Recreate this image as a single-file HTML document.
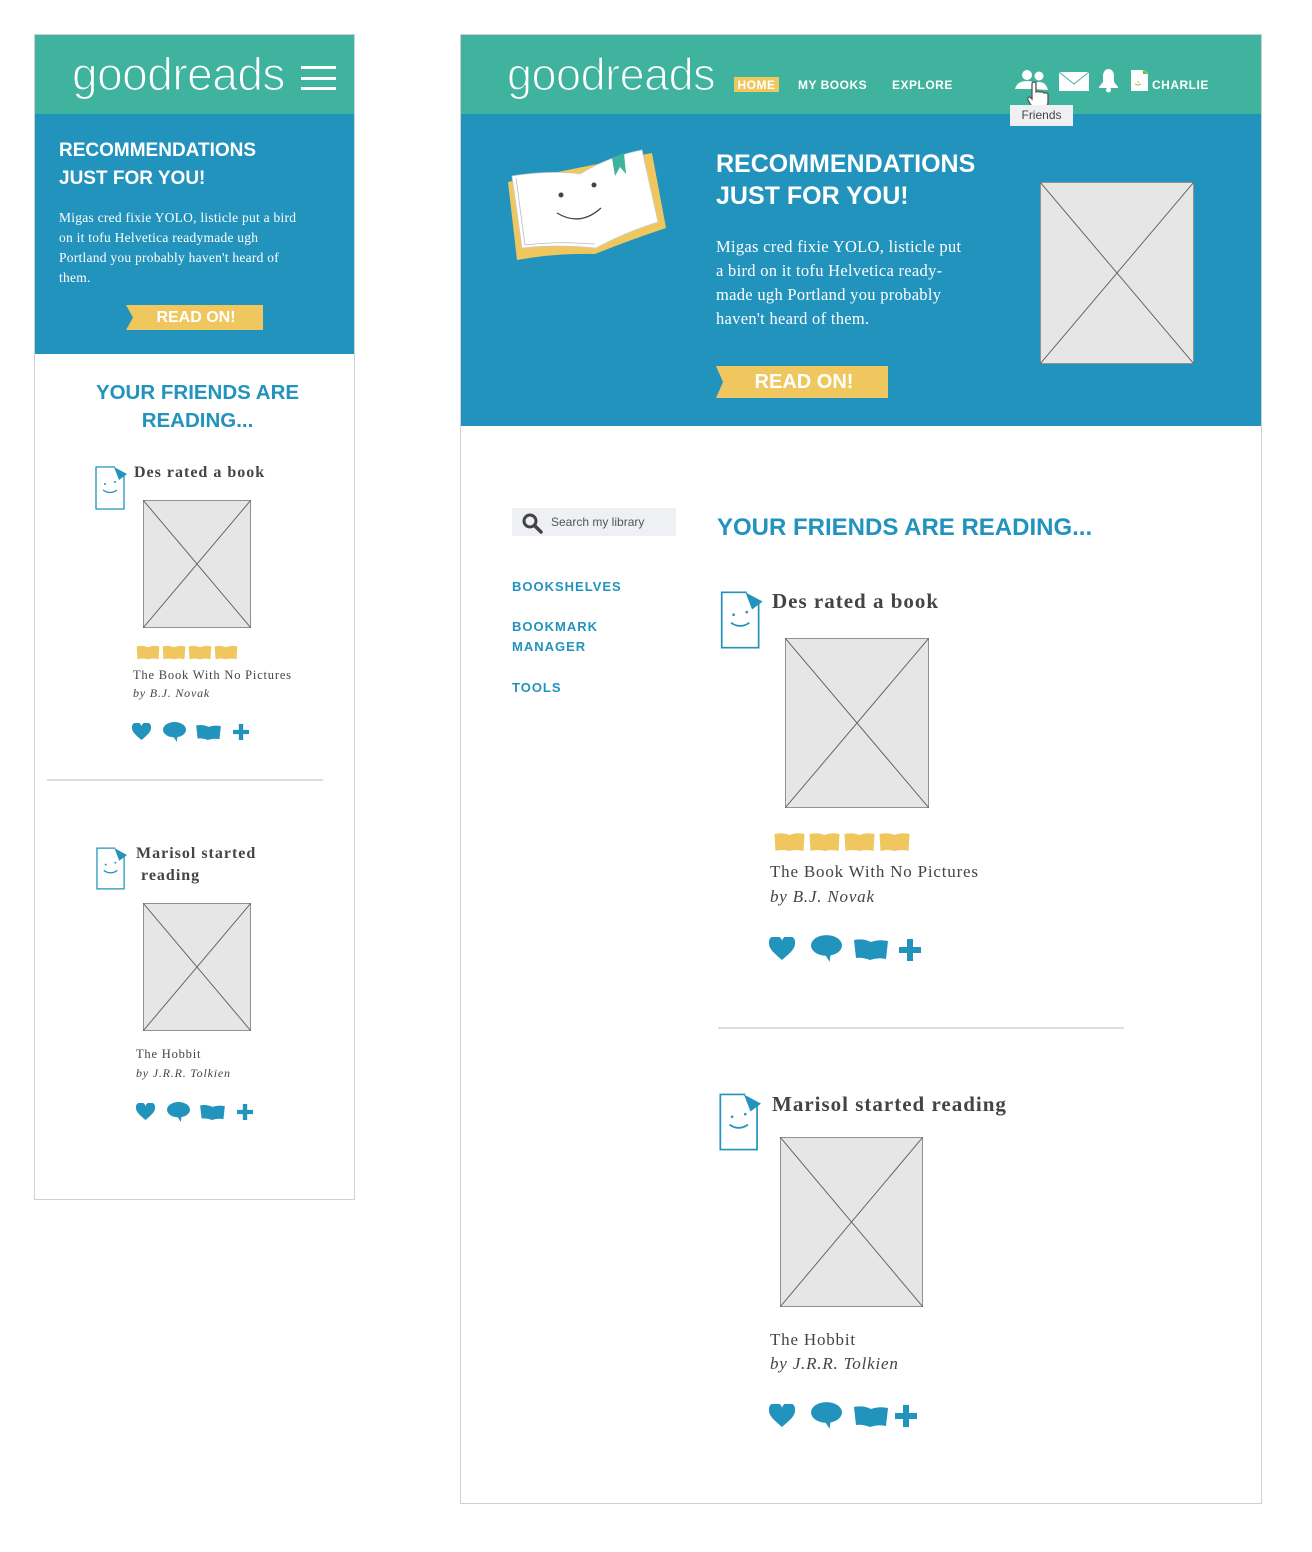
<!DOCTYPE html>
<html><head><meta charset="utf-8">
<style>
*{margin:0;padding:0;box-sizing:border-box}
body{width:1312px;height:1552px;background:#fff;position:relative;overflow:hidden;font-family:"Liberation Sans",sans-serif}
.a{position:absolute;white-space:nowrap}
.panel{position:absolute;border:1px solid #d0d0d0;background:#fff}
.green{background:#3fb39d}
.blue{background:#2293bc}
.logo{color:#fff;font-weight:normal;letter-spacing:-0.5px;-webkit-text-stroke:1.3px #3fb39d}
.hd{color:#fff;font-weight:bold}
.serif{font-family:"Liberation Serif",serif}
.nav{color:#fff;font-weight:bold;font-size:12px;letter-spacing:.5px}
.side{color:#2293bc;font-weight:bold;font-size:13px;letter-spacing:1px;line-height:20px}
.ttl{color:#2293bc;font-weight:bold}
.who{color:#444;font-family:"Liberation Serif",serif;font-weight:bold;letter-spacing:1px}
.bk{color:#444;font-family:"Liberation Serif",serif;letter-spacing:.8px}
svg{position:absolute;overflow:visible}
</style></head><body>
<svg width="0" height="0" style="position:absolute">
<defs>
<symbol id="ph" viewBox="0 0 100 100" preserveAspectRatio="none">
<rect x="0" y="0" width="100" height="100" fill="#e6e6e6" stroke="#777" stroke-width="1.5" vector-effect="non-scaling-stroke"/>
<path d="M0 0L100 100M100 0L0 100" stroke="#666" stroke-width="1" vector-effect="non-scaling-stroke"/>
</symbol>
<symbol id="av" viewBox="0 0 32 44">
<path d="M20 1H1V43H29V9" fill="#fff" stroke="#2293bc" stroke-width="1.3"/>
<path d="M19 1L32 8L24 14Z" fill="#2293bc"/>
<circle cx="10" cy="18" r="1" fill="#2293bc"/><circle cx="20" cy="16" r="1" fill="#2293bc"/>
<path d="M8 24Q15 29 22 24" fill="none" stroke="#2293bc" stroke-width="1.3"/>
</symbol>
<symbol id="heart" viewBox="0 0 26 24"><path d="M13 23C5 16 0 12 0 6.5A6.5 6.5 0 0 1 13 4A6.5 6.5 0 0 1 26 6.5C26 12 21 16 13 23Z" fill="#2293bc"/></symbol>
<symbol id="bub" viewBox="0 0 30 26"><ellipse cx="15" cy="10" rx="15" ry="10" fill="#2293bc"/><path d="M13 18L18 26L19 18Z" fill="#2293bc"/></symbol>
<symbol id="book" viewBox="0 0 34 22"><path d="M0 2Q9 0 17 4Q25 1 34 3L32 21Q24 19 16 22Q8 19 2 20Z" fill="#2293bc"/></symbol>
<symbol id="plus" viewBox="0 0 22 22"><path d="M8 0H14V8H22V14H14V22H8V14H0V8H8Z" fill="#2293bc"/></symbol>
<symbol id="star" viewBox="0 0 30 20"><path d="M0 2Q8 0 15 3Q22 0 30 2L29 19Q22 17 15 19Q8 17 1 19Z" fill="#f0c75e"/></symbol>
</defs></svg>

<!-- MOBILE -->
<div class="panel" style="left:34px;top:34px;width:321px;height:1166px"></div>
<div class="a green" style="left:35px;top:35px;width:319px;height:79px"></div>
<div class="a logo" style="left:72px;top:48px;font-size:46px;line-height:52px">goodreads</div>
<div class="a" style="left:301px;top:66px;width:35px;height:3px;background:#fff"></div>
<div class="a" style="left:301px;top:77px;width:35px;height:3px;background:#fff"></div>
<div class="a" style="left:301px;top:87px;width:35px;height:3px;background:#fff"></div>
<div class="a blue" style="left:35px;top:114px;width:319px;height:240px"></div>
<div class="a hd" style="left:59px;top:137px;font-size:19px;line-height:28px">RECOMMENDATIONS<br>JUST FOR YOU!</div>
<div class="a serif" style="left:59px;top:208px;font-size:13.5px;line-height:20px;color:#fff;letter-spacing:.25px">Migas cred fixie YOLO, listicle put a bird<br>on it tofu Helvetica readymade ugh<br>Portland you probably haven't heard of<br>them.</div>
<svg style="left:126px;top:305px" width="137" height="25"><path d="M0 0H137V25H0L7 12.5Z" fill="#f0c75e"/></svg>
<div class="a hd" style="left:126px;top:305px;width:140px;text-align:center;font-size:16px;line-height:25px">READ ON!</div>
<div class="a ttl" style="left:35px;top:379px;width:325px;text-align:center;font-size:20.5px;line-height:28px;white-space:normal">YOUR FRIENDS ARE<br>READING...</div>

<svg style="left:95px;top:466px" width="32" height="44"><use href="#av"/></svg>
<div class="a who" style="left:134px;top:463px;font-size:16px;line-height:20px">Des rated a book</div>
<svg style="left:143px;top:500px" width="108" height="128"><use href="#ph" width="108" height="128"/></svg>
<svg style="left:136px;top:645px" width="24" height="15"><use href="#star" width="24" height="15"/></svg>
<svg style="left:162px;top:645px" width="24" height="15"><use href="#star" width="24" height="15"/></svg>
<svg style="left:188px;top:645px" width="24" height="15"><use href="#star" width="24" height="15"/></svg>
<svg style="left:214px;top:645px" width="24" height="15"><use href="#star" width="24" height="15"/></svg>
<div class="a bk" style="left:133px;top:667px;font-size:12.5px;line-height:16px">The Book With No Pictures</div>
<div class="a bk" style="left:133px;top:685px;font-size:12px;line-height:16px;font-style:italic">by B.J. Novak</div>
<svg style="left:132px;top:723px" width="19" height="18"><use href="#heart" width="19" height="18"/></svg>
<svg style="left:163px;top:722px" width="23" height="20"><use href="#bub" width="23" height="20"/></svg>
<svg style="left:196px;top:724px" width="25" height="16"><use href="#book" width="25" height="16"/></svg>
<svg style="left:233px;top:724px" width="16" height="16"><use href="#plus" width="16" height="16"/></svg>
<div class="a" style="left:47px;top:779px;width:276px;height:2px;background:#ddd"></div>

<svg style="left:96px;top:847px" width="31" height="43"><use href="#av" width="31" height="43"/></svg>
<div class="a who" style="left:136px;top:843px;font-size:16px;line-height:22px">Marisol started<br>&nbsp;reading</div>
<svg style="left:143px;top:903px" width="108" height="128"><use href="#ph" width="108" height="128"/></svg>
<div class="a bk" style="left:136px;top:1046px;font-size:12.5px;line-height:16px">The Hobbit</div>
<div class="a bk" style="left:136px;top:1065px;font-size:12px;line-height:16px;font-style:italic">by J.R.R. Tolkien</div>
<svg style="left:136px;top:1103px" width="19" height="18"><use href="#heart" width="19" height="18"/></svg>
<svg style="left:167px;top:1102px" width="23" height="20"><use href="#bub" width="23" height="20"/></svg>
<svg style="left:200px;top:1104px" width="25" height="16"><use href="#book" width="25" height="16"/></svg>
<svg style="left:237px;top:1104px" width="16" height="16"><use href="#plus" width="16" height="16"/></svg>

<!-- DESKTOP -->
<div class="panel" style="left:460px;top:34px;width:802px;height:1470px"></div>
<div class="a green" style="left:461px;top:35px;width:800px;height:79px"></div>
<div class="a logo" style="left:507px;top:49px;font-size:45px;line-height:52px">goodreads</div>
<div class="a" style="left:734px;top:77px;width:45px;height:15px;background:#f0c75e"></div>
<div class="a nav" style="left:734px;top:78px;width:45px;text-align:center;line-height:14px">HOME</div>
<div class="a nav" style="left:798px;top:78px;line-height:14px">MY BOOKS</div>
<div class="a nav" style="left:892px;top:78px;line-height:14px">EXPLORE</div>
<svg style="left:1015px;top:69px" width="34" height="24"><circle cx="12" cy="6" r="5" fill="#fff"/><path d="M0 20Q2 12 12 12Q22 12 24 20Z" fill="#fff"/><circle cx="24" cy="7" r="4.5" fill="#fff"/><path d="M18 20Q20 13 24 13Q31 13 33 21Z" fill="#fff"/></svg>
<svg style="left:1024px;top:82px" width="26" height="30"><path d="M8 2Q8 0 10 0Q12 0 12 2V10Q14 9 16 10Q18 9 20 11Q22 10 24 12V20Q24 26 18 28H12Q8 26 4 18Q3 15 6 15L8 17Z" fill="#fff" stroke="#555" stroke-width="1.3"/></svg>
<svg style="left:1059px;top:72px" width="30" height="19"><rect width="30" height="19" fill="#fff"/><path d="M0 0L15 12L30 0" fill="none" stroke="#3fb39d" stroke-width="1"/></svg>
<svg style="left:1098px;top:69px" width="21" height="24"><path d="M10.5 0Q15 0 16 6V13L20 18V19H1V18L5 13V6Q6 0 10.5 0Z" fill="#fff"/><circle cx="10.5" cy="21" r="2.5" fill="#fff"/></svg>
<svg style="left:1131px;top:70px" width="18" height="21"><path d="M0 0H12V4H17V21H0Z" fill="#fff"/><path d="M12 0L17 4" stroke="#9c3" stroke-width="1.5"/><circle cx="7" cy="12" r="0.8" fill="#9c3"/><path d="M4 14Q7 16 10 14" stroke="#9c3" fill="none"/></svg>
<div class="a nav" style="left:1152px;top:78px;line-height:14px">CHARLIE</div>
<div class="a blue" style="left:461px;top:114px;width:800px;height:312px"></div>
<div class="a" style="left:1010px;top:105px;width:63px;height:21px;background:#eef0f4;color:#444;font-size:12px;line-height:21px;text-align:center">Friends</div>
<svg style="left:500px;top:140px" width="180" height="130">
<path d="M8 42L17 120Q55 113 95 114Q130 100 166 88L152 13Z" fill="#f0c75e"/>
<path d="M12 36Q50 30 80 34Q110 16 142 10L158 82Q126 92 96 108Q56 104 22 108Z" fill="#fff" stroke="#ccc" stroke-width="0.8"/>
<path d="M16 38L25 105Q56 101 95 104" fill="none" stroke="#bbb" stroke-width="0.8"/>
<path d="M112 18L124 13L126 34L120 27L115 36Z" fill="#3fb39d"/>
<circle cx="61" cy="55" r="2.5" fill="#444"/><circle cx="94" cy="45" r="2.5" fill="#444"/>
<path d="M57 73Q80 87 101 68" fill="none" stroke="#444" stroke-width="1.3"/>
</svg>
<div class="a hd" style="left:716px;top:148px;font-size:25px;line-height:32px">RECOMMENDATIONS<br>JUST FOR YOU!</div>
<div class="a serif" style="left:716px;top:235px;font-size:16.5px;line-height:24px;color:#fff;letter-spacing:.3px">Migas cred fixie YOLO, listicle put<br>a bird on it tofu Helvetica ready-<br>made ugh Portland you probably<br>haven't heard of them.</div>
<svg style="left:716px;top:366px" width="172" height="32"><path d="M0 0H172V32H0L7 16Z" fill="#f0c75e"/></svg>
<div class="a hd" style="left:724px;top:366px;width:160px;text-align:center;font-size:20px;line-height:32px">READ ON!</div>
<svg style="left:1040px;top:182px" width="154" height="182"><use href="#ph" width="154" height="182"/></svg>

<div class="a" style="left:512px;top:508px;width:164px;height:28px;background:#eef0f4"></div>
<svg style="left:522px;top:513px" width="22" height="22"><circle cx="8" cy="8" r="6" fill="none" stroke="#444" stroke-width="3"/><path d="M12.5 12.5L19 19" stroke="#444" stroke-width="3.5" stroke-linecap="round"/></svg>
<div class="a" style="left:551px;top:515px;font-size:12px;line-height:15px;color:#555">Search my library</div>
<div class="a side" style="left:512px;top:577px">BOOKSHELVES</div>
<div class="a side" style="left:512px;top:617px">BOOKMARK<br>MANAGER</div>
<div class="a side" style="left:512px;top:678px">TOOLS</div>

<div class="a ttl" style="left:717px;top:513px;font-size:24px;line-height:30px">YOUR FRIENDS ARE READING...</div>

<svg style="left:720px;top:591px" width="43" height="58"><use href="#av" width="43" height="58"/></svg>
<div class="a who" style="left:772px;top:588px;font-size:21px;line-height:26px">Des rated a book</div>
<svg style="left:785px;top:638px" width="144" height="170"><use href="#ph" width="144" height="170"/></svg>
<svg style="left:774px;top:832px" width="31" height="20"><use href="#star" width="31" height="20"/></svg>
<svg style="left:809px;top:832px" width="31" height="20"><use href="#star" width="31" height="20"/></svg>
<svg style="left:844px;top:832px" width="31" height="20"><use href="#star" width="31" height="20"/></svg>
<svg style="left:879px;top:832px" width="31" height="20"><use href="#star" width="31" height="20"/></svg>
<div class="a bk" style="left:770px;top:862px;font-size:17px;line-height:20px">The Book With No Pictures</div>
<div class="a bk" style="left:770px;top:887px;font-size:17px;line-height:20px;font-style:italic">by B.J. Novak</div>
<svg style="left:769px;top:937px" width="26" height="24"><use href="#heart" width="26" height="24"/></svg>
<svg style="left:811px;top:935px" width="31" height="27"><use href="#bub" width="31" height="27"/></svg>
<svg style="left:854px;top:938px" width="34" height="22"><use href="#book" width="34" height="22"/></svg>
<svg style="left:899px;top:939px" width="22" height="22"><use href="#plus" width="22" height="22"/></svg>
<div class="a" style="left:718px;top:1027px;width:406px;height:2px;background:#ddd"></div>

<svg style="left:719px;top:1093px" width="42" height="58"><use href="#av" width="42" height="58"/></svg>
<div class="a who" style="left:772px;top:1091px;font-size:21px;line-height:26px">Marisol started reading</div>
<svg style="left:780px;top:1137px" width="143" height="170"><use href="#ph" width="143" height="170"/></svg>
<div class="a bk" style="left:770px;top:1330px;font-size:17px;line-height:20px">The Hobbit</div>
<div class="a bk" style="left:770px;top:1354px;font-size:17px;line-height:20px;font-style:italic">by J.R.R. Tolkien</div>
<svg style="left:769px;top:1404px" width="26" height="24"><use href="#heart" width="26" height="24"/></svg>
<svg style="left:811px;top:1402px" width="31" height="27"><use href="#bub" width="31" height="27"/></svg>
<svg style="left:854px;top:1405px" width="34" height="22"><use href="#book" width="34" height="22"/></svg>
<svg style="left:895px;top:1405px" width="22" height="22"><use href="#plus" width="22" height="22"/></svg>
</body></html>
